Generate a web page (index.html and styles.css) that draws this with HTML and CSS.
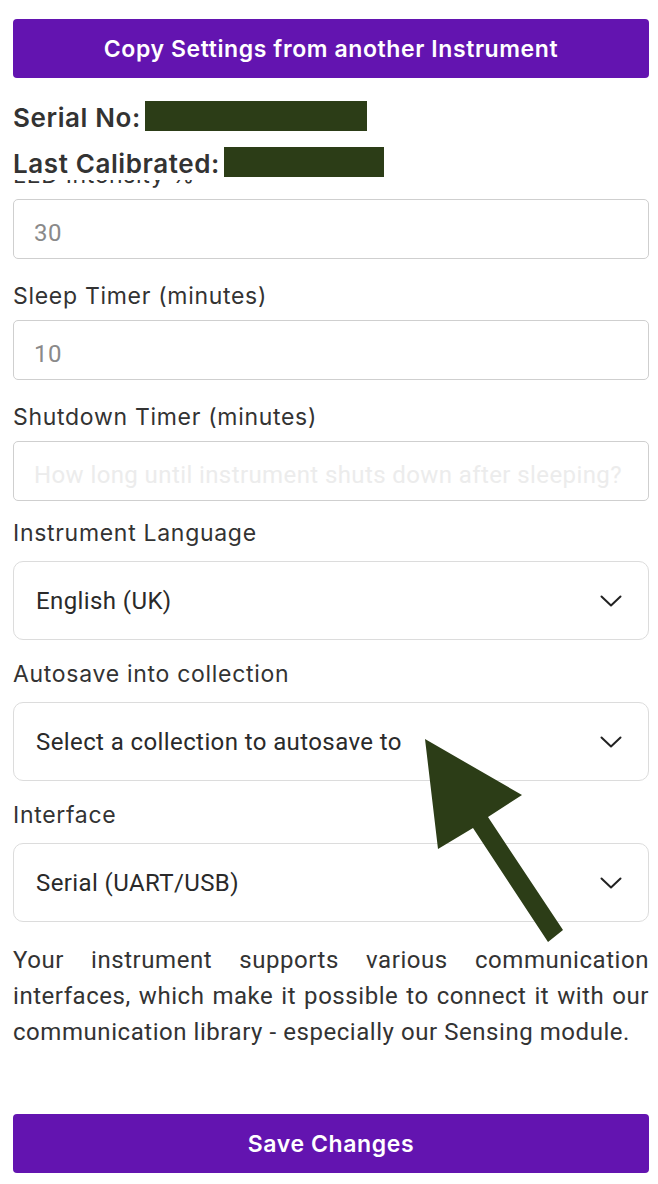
FILE: index.html
```html
<!DOCTYPE html>
<html lang="en">
<head>
<meta charset="utf-8">
<title>Instrument Settings</title>
<link rel="stylesheet" href="styles.css">
</head>
<body>
<div class="page">
  <header class="header">
    <button class="btn">Copy Settings from another Instrument</button>
    <div class="meta-row"><span class="meta-label">Serial No:</span><span class="redact redact-serial"></span></div>
    <div class="meta-row meta-row-2"><span class="meta-label">Last Calibrated:</span><span class="redact redact-cal"></span></div>
  </header>

  <main class="form">
    <div class="field field-first">
      <label class="label">LED Intensity %</label>
      <div class="input"><span class="value">30</span></div>
    </div>
    <div class="field">
      <label class="label">Sleep Timer (minutes)</label>
      <div class="input"><span class="value">10</span></div>
    </div>
    <div class="field">
      <label class="label">Shutdown Timer (minutes)</label>
      <div class="input"><span class="placeholder">How long until instrument shuts down after sleeping?</span></div>
    </div>
    <div class="field field-select">
      <label class="label">Instrument Language</label>
      <div class="select"><span class="select-text">English (UK)</span>
        <svg class="chev" width="22" height="12" viewBox="0 0 22 12"><path d="M1.5 1.5 L11 10.5 L20.5 1.5" fill="none" stroke="#222" stroke-width="2" stroke-linecap="round" stroke-linejoin="round"/></svg>
      </div>
    </div>
    <div class="field field-select">
      <label class="label">Autosave into collection</label>
      <div class="select"><span class="select-text">Select a collection to autosave to</span>
        <svg class="chev" width="22" height="12" viewBox="0 0 22 12"><path d="M1.5 1.5 L11 10.5 L20.5 1.5" fill="none" stroke="#222" stroke-width="2" stroke-linecap="round" stroke-linejoin="round"/></svg>
      </div>
    </div>
    <div class="field field-select">
      <label class="label">Interface</label>
      <div class="select"><span class="select-text">Serial (UART/USB)</span>
        <svg class="chev" width="22" height="12" viewBox="0 0 22 12"><path d="M1.5 1.5 L11 10.5 L20.5 1.5" fill="none" stroke="#222" stroke-width="2" stroke-linecap="round" stroke-linejoin="round"/></svg>
      </div>
    </div>
    <p class="note">Your instrument supports various communication interfaces, which make it possible to connect it with our communication library - especially our Sensing module.</p>
    <button class="btn btn-save">Save Changes</button>
  </main>

  <svg class="arrow" width="658" height="1184" viewBox="0 0 658 1184">
    <polygon points="425,739 522,795 488,817 563,930 548,942 473,828 438,849" fill="#2c3d17"/>
  </svg>
</div>
</body>
</html>
```
FILE: styles.css
```css
* { box-sizing: border-box; }
html, body { margin: 0; padding: 0; background: #fff; }
body { font-family: Inter, "Noto Sans", sans-serif; color: #333; }
.page { position: relative; width: 658px; min-height: 1184px; padding: 0 9px 0 13px; overflow: hidden; }

.header { position: sticky; top: 0; z-index: 2; background: #fff; padding: 19px 0 3px; }
.btn { display: block; width: 100%; height: 59px; border: 0; border-radius: 4px; background: #6314b0; color: #fff; font-family: Inter, "Noto Sans", sans-serif; font-size: 23px; font-weight: 600; letter-spacing: 0.6px; cursor: pointer; padding: 0; }
.meta-row { display: flex; align-items: center; height: 30px; margin-top: 23px; font-size: 26px; font-weight: 600; letter-spacing: 0.6px; color: #333; }
.meta-row-2 { margin-top: 16px; }
.meta-label { margin-right: 4px; padding-top: 3px; }
.redact { display: inline-block; height: 30px; background: #2c3d17; }
.redact-serial { width: 222px; }
.redact-cal { width: 160px; }

.form { position: relative; z-index: 1; margin-top: -17px; }
.field { margin-top: 25px; }
.field-first { margin-top: 0; }
.label { display: block; height: 24px; line-height: 24px; font-size: 23px; letter-spacing: 0.7px; color: #333; margin-bottom: 12px; }
.input { height: 60px; border: 1px solid #cfcfcf; border-radius: 5px; display: flex; align-items: center; padding: 8px 20px 0; font-family: Roboto, sans-serif; font-size: 24px; letter-spacing: 0.4px; }
.value { color: #8a8a8a; }
.placeholder { color: #ececec; white-space: nowrap; overflow: hidden; }

.field-select { margin-top: 20px; }
.field-select .label { margin-bottom: 16px; }
.field-select + .field-select { margin-top: 22px; }
.select { height: 79px; border: 1px solid #dcdcdc; border-radius: 10px; display: flex; align-items: center; justify-content: space-between; padding: 0 26px 0 22px; font-family: Roboto, sans-serif; font-size: 24px; letter-spacing: 0.4px; color: #2a2a2a; }
.chev { display: block; }

.note { margin: 20px 0 0; font-family: Roboto, sans-serif; font-size: 24px; line-height: 36px; color: #333; text-align: justify; letter-spacing: 0.55px; }
.btn-save { margin-top: 64px; }

.arrow { position: absolute; top: 0; left: 0; z-index: 3; pointer-events: none; }
```
